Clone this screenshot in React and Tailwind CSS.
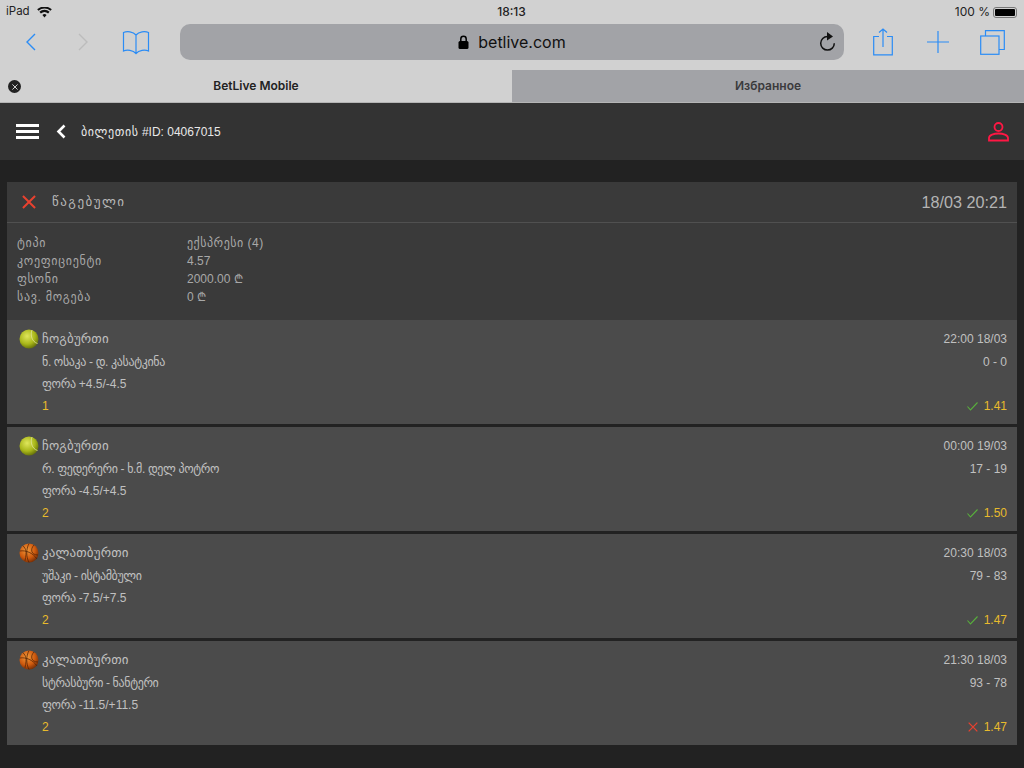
import React from "react";

const bets = [
  { sport: "ჩოგბურთი", type: "tennis", time: "22:00 18/03", teams: "ნ. ოსაკა - დ. კასატკინა", score: "0 - 0", hc: "+4.5/-4.5", pick: "1", odd: "1.41", win: true },
  { sport: "ჩოგბურთი", type: "tennis", time: "00:00 19/03", teams: "რ. ფედერერი - ხ.მ. დელ პოტრო", score: "17 - 19", hc: "-4.5/+4.5", pick: "2", odd: "1.50", win: true },
  { sport: "კალათბურთი", type: "ball", time: "20:30 18/03", teams: "უშაკი - ისტამბული", score: "79 - 83", hc: "-7.5/+7.5", pick: "2", odd: "1.47", win: true },
  { sport: "კალათბურთი", type: "ball", time: "21:30 18/03", teams: "სტრასბური - ნანტერი", score: "93 - 78", hc: "-11.5/+11.5", pick: "2", odd: "1.47", win: false },
];

const info = [
  ["ტიპი", "ექსპრესი (4)", true],
  ["კოეფიციენტი", "4.57", false],
  ["ფსონი", "2000.00 ₾", false],
  ["სავ. მოგება", "0 ₾", false],
];

const blue = "#2b8cf5";

function Tennis() {
  return (
    <svg width="20" height="20" viewBox="0 0 20 20" className="shrink-0">
      <defs>
        <radialGradient id="tg" cx="0.4" cy="0.35" r="0.7">
          <stop offset="0" stopColor="#dfe65c" />
          <stop offset="0.6" stopColor="#a9b71a" />
          <stop offset="1" stopColor="#5f6a08" />
        </radialGradient>
      </defs>
      <circle cx="10" cy="10" r="9.5" fill="url(#tg)" />
      <path d="M13 1C11 6 13 13 18.500 14.500" fill="none" stroke="#dfe59a" strokeWidth="0.8" />
    </svg>
  );
}

function Ball() {
  return (
    <svg width="20" height="20" viewBox="0 0 20 20" className="shrink-0">
      <defs>
        <radialGradient id="bg" cx="0.4" cy="0.35" r="0.7">
          <stop offset="0" stopColor="#f09a3c" />
          <stop offset="0.6" stopColor="#cf5a0e" />
          <stop offset="1" stopColor="#6e2a05" />
        </radialGradient>
      </defs>
      <circle cx="10" cy="10" r="9.5" fill="url(#bg)" />
      <g fill="none" stroke="#4a1e05" strokeWidth="0.7">
        <path d="M1 8C7 7 14 10 18 16" />
        <path d="M10 .6C7 6 7 14 10 19.400" />
        <path d="M4 2.800C7 6 8 8 6 17.800" />
        <path d="M15 2C11 6 12 12 19 12" />
      </g>
    </svg>
  );
}

function Cross({ size = 12, color = "#e8412f", w = 1.2 }) {
  return (
    <svg width={size} height={size} viewBox="0 0 12 12">
      <path d="M.8.8l10.400 10.400M11.200.8L.8 11.200" stroke={color} strokeWidth={w} fill="none" />
    </svg>
  );
}

function BetRow({ b }) {
  return (
    <div className="h-[104px] bg-[#4b4b4b] flex flex-col pt-[9px] pl-3 pr-[10px] text-[12px] text-[#c0c0c0]">
      <div className="flex items-center h-5">
        {b.type === "tennis" ? <Tennis /> : <Ball />}
        <span className="ml-[3px] text-[13px] tracking-[0.15px] text-[#c0c0c0]">{b.sport}</span>
        <span className="ml-auto">{b.time}</span>
      </div>
      <div className="flex items-center h-4 mt-[5px] pl-[23px]">
        <span className="tracking-[-0.36px]">{b.teams}</span>
        <span className="ml-auto">{b.score}</span>
      </div>
      <div className="h-4 mt-[6px] pl-[23px] flex items-center whitespace-pre">
        <span className="tracking-[-0.3px]">ფორა </span>
        <span>{b.hc}</span>
      </div>
      <div className="flex items-center h-4 mt-[6px] pl-[23px] text-[#e8bb2c]">
        <span>{b.pick}</span>
        <span className="ml-auto flex items-center gap-[6px]">
          {b.win ? (
            <svg width="11" height="9" viewBox="0 0 11 9">
              <path d="M.5 4.500l3 3.500L10.500.5" stroke="#58b03c" strokeWidth="1.100" fill="none" />
            </svg>
          ) : (
            <Cross size={10} w={1.5} />
          )}
          {b.odd}
        </span>
      </div>
    </div>
  );
}

export default function App() {
  return (
    <div className="w-[1024px] h-[768px] overflow-hidden bg-[#222222] font-['Liberation_Sans','DejaVu_Sans',sans-serif]">
      <div className="bg-[#d1d1d1] h-[70px] flex flex-col">
        <div className="h-[20px] pt-[3px] grid grid-cols-3 items-center pl-[6px] pr-[7px] text-[11.5px] text-[#222] font-['Inter','Liberation_Sans',sans-serif]">
          <div className="flex items-center gap-[7px]">
            <span>iPad</span>
            <svg width="15" height="11" viewBox="0 0 15 11">
              <path d="M7.500 10.500L5.400 8a3.200 3.200 0 014.200 0zM3.900 6.400L2.400 4.700a7.900 7.900 0 0110.200 0l-1.500 1.700a5.600 5.600 0 00-7.200 0zM1.500 3.700L.2 2.200a11.200 11.200 0 0114.600 0l-1.300 1.500a9.200 9.200 0 00-12 0z" fill="#111" />
            </svg>
          </div>
          <div className="text-center font-medium text-[12px]">18:13</div>
          <div className="flex items-center justify-end gap-[3px]">
            <span className="text-[12px]">100 %</span>
            <span className="w-[24px] h-[11px] border border-[#777] rounded-[3px] p-[1px] flex">
              <span className="flex-1 bg-black rounded-[1px]" />
            </span>
          </div>
        </div>
        <div className="h-[36px] mt-[4px] flex items-center">
          <div className="w-[180px] shrink-0 flex items-center">
            <svg width="11" height="18" viewBox="0 0 11 18" className="ml-[25px]">
              <path d="M10 1L2 9l8 8" stroke={blue} strokeWidth="1.400" fill="none" />
            </svg>
            <svg width="11" height="18" viewBox="0 0 11 18" className="ml-[42px]">
              <path d="M1 1l8 8-8 8" stroke="#bcbcbc" strokeWidth="1.400" fill="none" />
            </svg>
            <svg width="28" height="25" viewBox="0 0 28 25" className="ml-[33px]">
              <path d="M14 5C11 1.500 5 1 1.500 2.500V21C5 19.500 11 20 14 23.500 17 20 23 19.500 26.500 21V2.500C23 1 17 1.500 14 5zM14 5v18.500" stroke={blue} strokeWidth="1.200" fill="none" />
            </svg>
          </div>
          <div className="w-[664px] h-[36px] shrink-0 rounded-[10px] bg-[#a2a3a7] flex items-center justify-center relative text-[16px] text-[#111] font-['Inter','Liberation_Sans',sans-serif]">
            <svg width="11" height="14" viewBox="0 0 11 14" className="mr-[9px]">
              <path d="M2.800 6V4a2.700 2.700 0 015.400 0v2" stroke="#000" strokeWidth="1.500" fill="none" />
              <rect x="0.500" y="6" width="10" height="8" rx="1.500" fill="#000" />
            </svg>
            <span>betlive.com</span>
            <svg width="17" height="19" viewBox="0 0 17 19" className="absolute right-[8px] top-[8px]">
              <path d="M8.500 4.500a6.800 6.800 0 106.800 6.800" stroke="#111" strokeWidth="1.500" fill="none" />
              <path d="M8 0l6 4.500L8 8.500z" fill="#111" />
            </svg>
          </div>
          <div className="flex-1 flex items-center">
            <svg width="20" height="28" viewBox="0 0 20 28" className="ml-[29px]">
              <path d="M6 8.500H.7v18.300h18.600V8.500H14M10 19V1M6 4.500L10 1l4 3.500" stroke={blue} strokeWidth="1.200" fill="none" />
            </svg>
            <svg width="22" height="22" viewBox="0 0 22 22" className="ml-[34px]">
              <path d="M11 0v22M0 11h22" stroke={blue} strokeWidth="1.200" fill="none" />
            </svg>
            <svg width="25" height="25" viewBox="0 0 25 25" className="ml-[31px] mt-[1px]">
              <path d="M5.500 6V.7h18.800v18.800H19" stroke={blue} strokeWidth="1.200" fill="none" />
              <rect x="0.700" y="6" width="18.300" height="18.300" stroke={blue} strokeWidth="1.200" fill="none" />
            </svg>
          </div>
        </div>
      </div>

      <div className="h-[33px] flex border-b border-[#b5b5b5] text-[12px] font-semibold font-['Inter','Liberation_Sans',sans-serif]">
        <div className="w-[512px] bg-[#d1d1d1] relative flex items-center justify-center text-[#222]">
          <span className="absolute left-[8px] top-[10px] w-[13px] h-[13px] rounded-full bg-[#222] flex items-center justify-center">
            <Cross size={6} color="#d1d1d1" w={2} />
          </span>
          BetLive Mobile
        </div>
        <div className="w-[512px] bg-[#a2a3a7] flex items-center justify-center text-[#3a3a3c]">Избранное</div>
      </div>

      <div className="h-[57px] bg-[#333333] flex items-center pl-[16px] pr-[15px]">
        <div className="w-[23px] flex flex-col gap-[3px]">
          <span className="h-[3px] bg-white" />
          <span className="h-[3px] bg-white" />
          <span className="h-[3px] bg-white" />
        </div>
        <svg width="10" height="15" viewBox="0 0 10 15" className="ml-[17px]">
          <path d="M8.500 1.500L2.500 7.500l6 6" stroke="#fff" strokeWidth="2.600" fill="none" />
        </svg>
        <span className="ml-[15px] text-[12px] text-[#e8e8e8] whitespace-pre">
          <span className="tracking-[0.6px]">ბილეთის</span>
          <span> #ID: 04067015</span>
        </span>
        <svg width="21" height="21" viewBox="0 0 21 21" className="ml-auto">
          <circle cx="10.500" cy="6" r="4" stroke="#ff1744" strokeWidth="1.800" fill="none" />
          <path d="M1 19.500h19V17c0-3-5-4.500-9.500-4.500S1 14 1 17z" stroke="#ff1744" strokeWidth="1.800" fill="none" />
        </svg>
      </div>

      <div className="mx-[7px] mt-[22px] flex flex-col">
        <div className="bg-[#3a3a3a]">
          <div className="h-[41px] border-b border-[#505050] flex items-center pl-[15px] pr-[10px]">
            <Cross size={14} w={1.700} />
            <span className="ml-[16px] text-[13px] tracking-[1.5px] text-[#b8b8b8]">წაგებული</span>
            <span className="ml-auto text-[16.2px] text-[#b4b4b4]">18/03 20:21</span>
          </div>
          <div className="pt-[11px] pb-[14px] pl-[10px] text-[12px] leading-[18px] text-[#a8a8a8] grid grid-cols-[170px_1fr]">
            {info.map(([k, v, geo]) => (
              <React.Fragment key={k}>
                <span className="tracking-[0.7px]">{k}</span>
                <span className={geo ? "tracking-[0.5px]" : ""}>{v}</span>
              </React.Fragment>
            ))}
          </div>
        </div>
        <div className="flex flex-col gap-[3px]">
          {bets.map((b, i) => (
            <BetRow key={i} b={b} />
          ))}
        </div>
      </div>
    </div>
  );
}
